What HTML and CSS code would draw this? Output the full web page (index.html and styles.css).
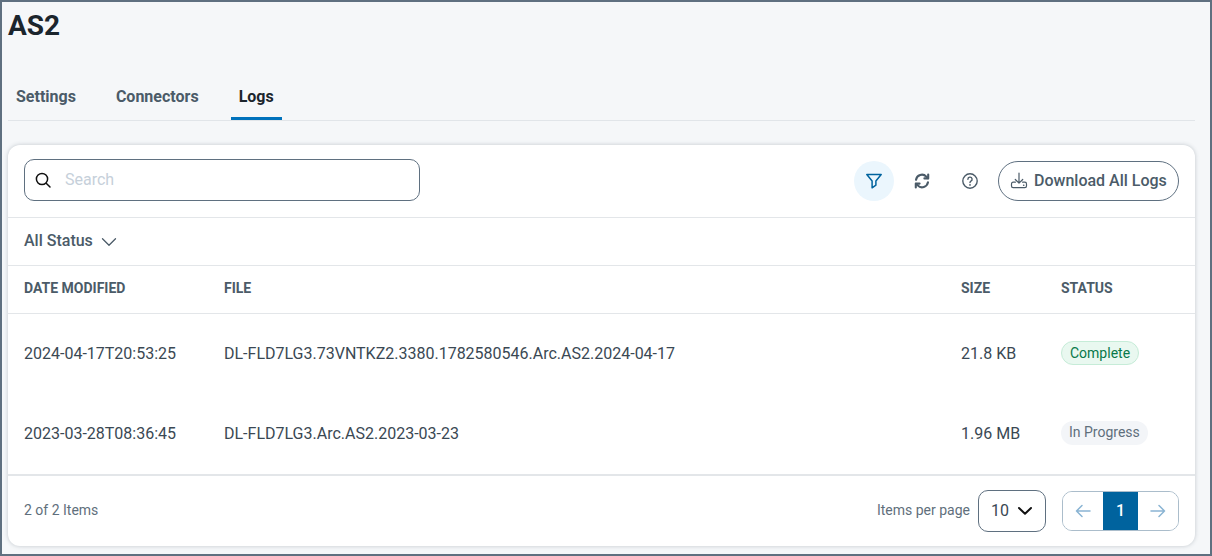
FILE: index.html
```html
<!DOCTYPE html>
<html lang="en">
<head>
<meta charset="utf-8">
<title>AS2 Logs</title>
<link rel="stylesheet" href="styles.css">
</head>
<body>
<div class="frame">
  <h1 class="title">AS2</h1>
  <nav class="tabs">
    <a class="tab">Settings</a>
    <a class="tab">Connectors</a>
    <a class="tab active">Logs</a>
  </nav>
  <section class="card">
    <div class="toolbar">
      <div class="search">
        <svg class="search-icon" viewBox="0 0 18 18" width="18" height="18" fill="none" stroke="#111" stroke-width="1.5" stroke-linecap="round"><circle cx="8" cy="8" r="5.6"/><path d="M12.2 12.2 16 16"/></svg>
        <span class="placeholder">Search</span>
      </div>
      <div class="actions">
        <button class="icon-btn on">
          <svg viewBox="0 0 18 18" width="18" height="18" fill="none" stroke="#00639e" stroke-width="1.5" stroke-linejoin="round"><path d="M1.8 2.5h14.4L10.9 9v4.2l-3.8 2.6V9z"/></svg>
        </button>
        <button class="icon-btn">
          <svg viewBox="0 0 18 18" width="18" height="18" fill="none" stroke="#4b5b68" stroke-width="2.1" stroke-linecap="round" stroke-linejoin="round"><path d="M3 7.8A6 6 0 0 1 13.3 4.6L15 6.2"/><path d="M15.2 2.6v3.8h-3.8"/><path d="M15 10.2A6 6 0 0 1 4.7 13.4L3 11.8"/><path d="M2.8 15.4v-3.8h3.8"/></svg>
        </button>
        <button class="icon-btn">
          <svg viewBox="0 0 18 18" width="18" height="18" fill="none" stroke="#4b5b68" stroke-width="1.4" stroke-linecap="round"><circle cx="9" cy="9" r="7.2"/><path d="M6.9 7.2A2.1 2.1 0 1 1 9.9 9.1C9.2 9.5 9 9.9 9 10.6"/><path d="M9 12.8v.2" stroke-width="1.7"/></svg>
        </button>
        <button class="download">
          <svg viewBox="0 0 18 18" width="18" height="18" fill="none" stroke="#4b5b68" stroke-width="1.2" stroke-linecap="round" stroke-linejoin="round"><path d="M9 1v10M5.3 7.5 9 11.2l3.7-3.7"/><path d="M5.4 10.2H3.2c-1 0-1.7.8-1.7 1.7v2c0 1 .7 1.7 1.7 1.7h11.6c1 0 1.7-.7 1.7-1.7v-2c0-.9-.7-1.7-1.7-1.7h-2.2"/><path d="M13.6 13.2h.2" stroke-width="1.5"/></svg>
          <span class="lift">Download All Logs</span>
        </button>
      </div>
    </div>
    <div class="filter-row">
      <span class="lift">All Status</span>
      <svg viewBox="0 0 16 10" width="16" height="10" fill="none" stroke="#4b5b68" stroke-width="1.3" stroke-linecap="round" stroke-linejoin="round"><path d="M1.5 1.8 8 8.2l6.5-6.4"/></svg>
    </div>
    <div class="row head">
      <div>DATE MODIFIED</div><div>FILE</div><div>SIZE</div><div>STATUS</div>
    </div>
    <div class="row body">
      <div>2024-04-17T20:53:25</div>
      <div>DL-FLD7LG3.73VNTKZ2.3380.1782580546.Arc.AS2.2024-04-17</div>
      <div>21.8 KB</div>
      <div><span class="badge ok">Complete</span></div>
    </div>
    <div class="row body">
      <div>2023-03-28T08:36:45</div>
      <div>DL-FLD7LG3.Arc.AS2.2023-03-23</div>
      <div>1.96 MB</div>
      <div><span class="badge wait">In Progress</span></div>
    </div>
    <footer class="footer">
      <span class="count">2 of 2 Items</span>
      <div class="paging">
        <span class="count">Items per page</span>
        <div class="per-page">
          <span class="lift">10</span>
          <svg viewBox="0 0 16 10" width="16" height="10" fill="none" stroke="#111" stroke-width="2" stroke-linecap="round" stroke-linejoin="round"><path d="M2 2l6 5.8L14 2"/></svg>
        </div>
        <div class="pager">
          <button class="page-arrow"><svg viewBox="0 0 16 14" width="16" height="14" fill="none" stroke="#8ab4d3" stroke-width="1.5" stroke-linecap="round" stroke-linejoin="round"><path d="M15 7H1.5M7 1.5 1.5 7 7 12.5"/></svg></button>
          <span class="page-current">1</span>
          <button class="page-arrow"><svg viewBox="0 0 16 14" width="16" height="14" fill="none" stroke="#8ab4d3" stroke-width="1.5" stroke-linecap="round" stroke-linejoin="round"><path d="M1 7h13.5M9 1.5 14.5 7 9 12.5"/></svg></button>
        </div>
      </div>
    </footer>
  </section>
</div>
</body>
</html>
```
FILE: styles.css
```css
* { box-sizing: border-box; }
html, body { margin: 0; height: 100%; }
body { font-family: Roboto, "Liberation Sans", sans-serif; color: #1f2a33; }
.frame {
  width: 1212px;
  height: 556px;
  border: 2px solid #5f7080;
  background: #f5f7f9;
  padding: 0 14px 0 6px;
  overflow: hidden;
}
.title {
  margin: 0;
  height: 46px;
  font-size: 28px;
  line-height: 48px;
  font-weight: 700;
  color: #1b252d;
}
.tabs {
  margin-top: 27px;
  height: 46px;
  display: flex;
  gap: 24px;
  border-bottom: 1px solid #e1e5e9;
  margin-right: 1px;
}
.tab {
  padding: 0 8px;
  height: 45px;
  line-height: 43px;
  font-size: 16px;
  font-weight: 700;
  color: #4b5b68;
}
.tab.active { color: #1b252d; border-bottom: 3px solid #0072bc; }
.card {
  margin-top: 24px;
  width: 1187px;
  height: 401px;
  background: #fff;
  border-radius: 12px;
  box-shadow: 0 0 4px rgba(60, 75, 90, .28);
  overflow: hidden;
}
.toolbar {
  height: 73px;
  padding: 14px 16px 0;
  display: flex;
  justify-content: space-between;
  align-items: flex-start;
  border-bottom: 1px solid #e3e6e9;
}
.search {
  width: 396px;
  height: 42px;
  border: 1px solid #5f7080;
  border-radius: 10px;
  display: flex;
  align-items: center;
  padding-left: 9px;
  gap: 13px;
}
.search-icon { flex: none; }
.lift { padding-bottom: 2px; }
.placeholder { font-size: 16px; color: #c6d0da; padding-bottom: 2px; }
.actions { display: flex; align-items: center; margin-top: 2px; }
.icon-btn {
  width: 40px;
  height: 40px;
  margin-right: 8px;
  border: 0;
  border-radius: 50%;
  background: transparent;
  padding: 0;
  display: flex;
  align-items: center;
  justify-content: center;
}
.icon-btn.on { background: #ebf6fd; }
.download {
  width: 181px;
  height: 40px;
  border: 1px solid #5f7080;
  border-radius: 20px;
  background: #fff;
  padding: 0 0 0 11px;
  display: flex;
  align-items: center;
  gap: 6px;
  font: 500 16px Roboto, sans-serif;
  color: #4b5b68;
  white-space: nowrap;
}
.filter-row {
  height: 48px;
  padding: 0 16px;
  display: flex;
  align-items: center;
  gap: 9px;
  font-size: 16px;
  font-weight: 500;
  color: #4b5b68;
  border-bottom: 1px solid #e3e6e9;
}
.filter-row svg { margin-left: -1px; }
.row {
  display: grid;
  grid-template-columns: 200px 737px 100px 1fr;
  align-items: center;
  padding: 0 16px;
}
.row.head {
  height: 48px;
  padding-bottom: 3px;
  font-size: 14px;
  font-weight: 700;
  color: #4b5b68;
  border-bottom: 1px solid #e3e6e9;
}
.row.body {
  height: 80px;
  padding-bottom: 2px;
  font-size: 16px;
  color: #3a4853;
}
.badge {
  display: inline-block;
  height: 24px;
  line-height: 22px;
  padding: 0 8px;
  border-radius: 12px;
  font-size: 14px;
}
.badge.ok { background: #e9f8f0; border: 1px solid #c6ecd8; color: #07794a; }
.badge.wait { background: #f3f5f8; color: #5f6f7c; }
.footer {
  height: 72px;
  border-top: 2px solid #e3e6e9;
  padding: 0 16px;
  display: flex;
  align-items: center;
  justify-content: space-between;
}
.count { font-size: 14px; color: #5f6f7c; padding-bottom: 2px; }
.paging { display: flex; align-items: center; }
.per-page {
  width: 68px;
  height: 42px;
  margin-left: 8px;
  border: 1px solid #5f7080;
  border-radius: 10px;
  display: flex;
  align-items: center;
  gap: 8px;
  padding-left: 12px;
  font-size: 16px;
  color: #3a4853;
}
.pager {
  margin-left: 16px;
  width: 117px;
  height: 40px;
  border: 1px solid #abbdcb;
  border-radius: 10px;
  display: flex;
  overflow: hidden;
}
.page-arrow {
  flex: 1;
  border: 0;
  background: #fff;
  padding: 0;
  display: flex;
  align-items: center;
  justify-content: center;
}
.page-current {
  width: 35px;
  background: #00639e;
  color: #fff;
  font-size: 16px;
  font-weight: 500;
  text-align: center;
  line-height: 38px;
}
```
